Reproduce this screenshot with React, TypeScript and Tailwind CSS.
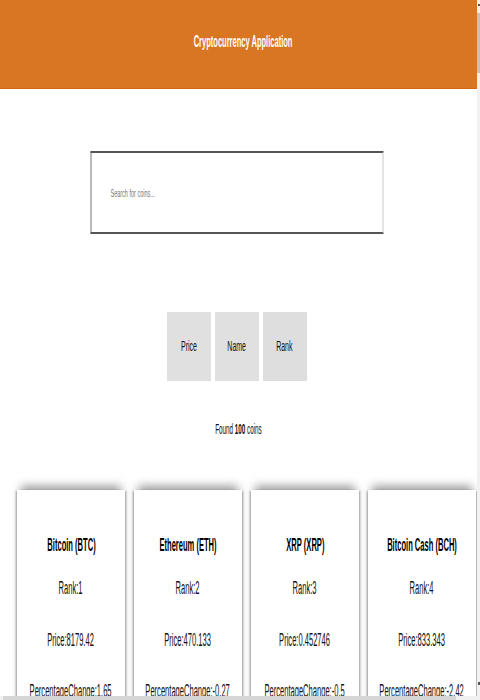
import React, { useState } from 'react';

type Coin = {
  name: string;
  symbol: string;
  rank: number;
  price: string;
  change: string;
};

const coins: Coin[] = [
  { name: 'Bitcoin', symbol: 'BTC', rank: 1, price: '8179.42', change: '1.65' },
  { name: 'Ethereum', symbol: 'ETH', rank: 2, price: '470.133', change: '-0.27' },
  { name: 'XRP', symbol: 'XRP', rank: 3, price: '0.452746', change: '-0.5' },
  { name: 'Bitcoin Cash', symbol: 'BCH', rank: 4, price: '833.343', change: '-2.42' },
];

function Line({ children, className = '' }: { children: React.ReactNode; className?: string }) {
  return (
    <div className={`flex justify-center ${className}`}>
      <span className="whitespace-nowrap scale-x-[0.42]">{children}</span>
    </div>
  );
}

function CoinCard({ coin }: { coin: Coin }) {
  return (
    <div className="w-[108px] shrink-0 h-[260px] bg-white pt-[44px] shadow-[0_-8px_9px_-4px_rgba(0,0,0,0.4),-2px_0_2px_-1px_rgba(0,0,0,0.35),2px_0_2px_-1px_rgba(0,0,0,0.35)]">
      <Line className="h-[22px] items-center text-[18px] font-bold text-black">
        {coin.name} ({coin.symbol})
      </Line>
      <Line className="mt-[21px] h-[22px] items-center text-[18px] text-[#111]">Rank:{coin.rank}</Line>
      <Line className="mt-[30px] h-[22px] items-center text-[18px] text-[#111]">Price:{coin.price}</Line>
      <Line className="mt-[29px] h-[22px] items-center text-[18px] text-[#111]">PercentageChange:{coin.change}</Line>
    </div>
  );
}

export default function App() {
  const [search, setSearch] = useState('');
  const [sortBy, setSortBy] = useState('rank');

  const filtered = coins.filter(c => c.name.toLowerCase().includes(search.toLowerCase()));

  return (
    <div className="w-[480px] h-[700px] flex flex-col overflow-hidden bg-white font-['Liberation_Sans',Arial,sans-serif]">
      <div className="flex flex-1 min-h-0">
        <div className="flex-1 min-w-0 overflow-hidden">
          <header className="h-[89px] pb-[4px] pl-[10px] bg-[#d97624] border-b border-[#d9660f] flex items-center justify-center">
            <span className="whitespace-nowrap scale-x-[0.47] text-[16px] font-bold text-white">Cryptocurrency Application</span>
          </header>

          <div className="mt-[62px] flex justify-center pr-[4px]">
            <input
              value={search}
              onChange={e => setSearch(e.target.value)}
              placeholder="Search for coins..."
              className="shrink-0 w-[586px] h-[83px] scale-x-50 bg-white border-t-2 border-b-2 border-l-2 border-r-2 border-t-[#555] border-b-[#555] border-l-[#777] border-r-[#c9c9c9] pl-[38px] text-[11px] text-[#333] placeholder:text-[#777] outline-none"
            />
          </div>

          <div className="mt-[78px] flex justify-center gap-[4px] pr-[4px]">
            {['Price', 'Name', 'Rank'].map(label => (
              <button
                key={label}
                onClick={() => setSortBy(label.toLowerCase())}
                className={`w-[44px] h-[69px] flex items-center justify-center ${sortBy === label.toLowerCase() ? 'bg-[#dedede]' : 'bg-[#e0e0e0]'}`}
              >
                <span className="whitespace-nowrap scale-x-50 text-[14px] text-[#111]">{label}</span>
              </button>
            ))}
          </div>

          <div className="mt-[39px] h-[18px] flex items-center justify-center">
            <span className="whitespace-nowrap scale-x-[0.42] text-[15px] text-[#111]">
              Found <b>100</b> coins
            </span>
          </div>

          <div className="mt-[52px] flex gap-[9px] pl-[17px]">
            {filtered.map(coin => (
              <CoinCard key={coin.symbol} coin={coin} />
            ))}
          </div>
        </div>

        <div className="w-[3px] shrink-0 bg-[#f1f1f1] flex flex-col">
          <div className="h-[13px] flex justify-center pt-[4px]">
            <div className="w-[2px] h-[2px] bg-[#555]" />
          </div>
          <div className="h-[60px] bg-[#c1c1c1]" />
          <div className="flex-1" />
          <div className="h-[14px] flex justify-center">
            <div className="w-[2px] h-[3px] bg-[#555]" />
          </div>
        </div>
      </div>

      <div className="h-[4px] shrink-0 bg-[#f1f1f1] flex">
        <div className="ml-[3px] w-[453px] bg-[#d6d6d6]" />
      </div>
    </div>
  );
}
